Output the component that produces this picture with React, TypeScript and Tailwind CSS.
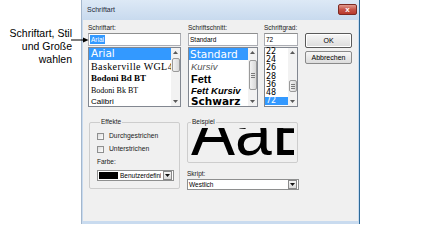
const sans = "font-['Liberation_Sans',Arial,sans-serif]";

const Arrow = ({ up }: { up?: boolean }) => (
  <div className="h-[9px] flex items-center justify-center">
    <svg width="5" height="3" viewBox="0 0 5 3">
      <path d={up ? "M0 3L2.5 0L5 3Z" : "M0 0L2.5 3L5 0Z"} fill="#5a5a5a" />
    </svg>
  </div>
);

const Thumb = ({ className, grip }: { className: string; grip?: boolean }) => (
  <div
    className={`${className} mx-[0.5px] rounded-[2px] border border-[#9a9a9a] bg-linear-to-r from-[#f3f3f3] to-[#d8d8d8] flex flex-col items-center justify-center gap-[1px]`}
  >
    {grip && (
      <>
        <div className="w-[4px] h-px bg-[#7a7a7a]" />
        <div className="w-[4px] h-px bg-[#7a7a7a]" />
        <div className="w-[4px] h-px bg-[#7a7a7a]" />
      </>
    )}
  </div>
);

const Scrollbar = ({ thumb, grip }: { thumb: string; grip?: boolean }) => (
  <div className="w-[9px] shrink-0 flex flex-col bg-[#f2f2f2]">
    <Arrow up />
    <div className="flex-1">
      <Thumb className={thumb} grip={grip} />
    </div>
    <Arrow />
  </div>
);

const Input = ({ children }: { children: React.ReactNode }) => (
  <div className="h-[13px] border border-[#abadb3] border-t-[#8e8f8f] bg-white pl-[1px] flex items-center text-[6.5px] leading-[9px]">
    {children}
  </div>
);

const Label = ({ children }: { children: React.ReactNode }) => (
  <div className="h-[11px] flex items-end pb-[1px] text-[6.5px] leading-[8px] text-[#1a1a1a]">{children}</div>
);

const DropButton = () => (
  <div className="w-[9px] h-[9px] mr-px shrink-0 border border-[#8a8a8a] bg-linear-to-b from-[#f6f6f6] to-[#dadada] flex items-center justify-center">
    <svg width="5" height="3" viewBox="0 0 5 3">
      <path d="M0 0L2.5 3L5 0Z" fill="#111" />
    </svg>
  </div>
);

const Checkbox = ({ label }: { label: string }) => (
  <div className="h-[10px] flex items-center gap-[5px]">
    <div className="w-[7px] h-[7px] border border-[#8e8f8f] bg-linear-to-br from-[#dcdcdc] to-white" />
    <span className="text-[6.75px] leading-[8px] text-[#1a1a1a]">{label}</span>
  </div>
);

export default function App() {
  return (
    <div className={`relative w-[429px] h-[240px] bg-white flex overflow-hidden ${sans}`}>
      {/* callout */}
      <div className="w-[81px] shrink-0 pt-[27px] pr-[9px] text-right text-[10.5px] leading-[13px] text-black">
        Schriftart, Stil
        <br />
        und Große
        <br />
        wahlen
      </div>
      <svg className="absolute left-[71px] top-[37px]" width="18" height="6" viewBox="0 0 18 6">
        <path d="M0 3H13" stroke="#000" strokeWidth="1" />
        <path d="M12 0.5L17.5 3L12 5.5Z" fill="#000" />
      </svg>

      {/* dialog window */}
      <div className="w-[279px] h-[224px] shrink-0 flex flex-col bg-[#c9dbef] border-l border-l-[#a4b7cd] border-r border-r-[#2d6a99]">
        <div className="h-[20px] shrink-0 flex items-center justify-between pl-[5px] pr-[2px] bg-linear-to-b from-[#dde9f6] to-[#c8daee]">
          <span className="text-[7px] leading-[9px] text-[#1e2b3a] -mt-[1px]">Schriftart</span>
          <div className="w-[19px] h-[11px] -mt-[1px] rounded-[2px] border border-[#7d2a22] bg-linear-to-b from-[#e09a8f] via-[#c75448] to-[#b8392c] flex items-center justify-center">
            <span className="text-[8px] leading-[8px] font-bold text-white">x</span>
          </div>
        </div>

        <div className="flex-1 mx-px mb-[3px] bg-[#f0f0f0] pl-[5px] pt-[2px] text-black">
          {/* top row */}
          <div className="flex">
            {/* Schriftart */}
            <div className="w-[93px] flex flex-col">
              <Label>Schriftart:</Label>
              <Input>
                <span className="bg-[#3399ff] text-white px-px">Arial</span>
              </Input>
              <div className="mt-px h-[60px] border border-[#828790] bg-white flex">
                <div className="flex-1 min-w-0 flex flex-col overflow-hidden whitespace-nowrap">
                  <div className="h-[12px] shrink-0 bg-[#3399ff] text-white flex items-center pl-[2px] font-['DejaVu_Sans',sans-serif] text-[10.5px]">
                    Arial
                  </div>
                  <div className="h-[13px] shrink-0 flex items-center pl-[2px] font-['Liberation_Serif',serif] text-[10px] tracking-[0.4px]">
                    Baskerville WGL4 BT
                  </div>
                  <div className="h-[12px] shrink-0 flex items-center pl-[2px] font-['Liberation_Serif',serif] text-[9px] font-bold">
                    Bodoni Bd BT
                  </div>
                  <div className="h-[12px] shrink-0 flex items-center pl-[2px] font-['Liberation_Serif',serif] text-[8px]">
                    Bodoni Bk BT
                  </div>
                  <div className="h-[9px] shrink-0 flex items-center pl-[2px] text-[8px] leading-[9px]">Calibri</div>
                </div>
                <Scrollbar thumb="mt-[1px] h-[14px]" />
              </div>
            </div>

            {/* Schriftschnitt */}
            <div className="ml-[7px] w-[70px] flex flex-col">
              <Label>Schriftschnitt:</Label>
              <Input>Standard</Input>
              <div className="mt-px h-[60px] border border-[#828790] bg-white flex">
                <div className="flex-1 min-w-0 flex flex-col overflow-hidden whitespace-nowrap">
                  <div className="h-[12px] shrink-0 bg-[#3399ff] text-white flex items-center pl-[1px] font-['DejaVu_Sans',sans-serif] text-[10.5px] leading-[12px]">
                    Standard
                  </div>
                  <div className="h-[13px] shrink-0 flex items-center pl-[2px] text-[9.5px] leading-[12px] italic text-[#555]">Kursiv</div>
                  <div className="h-[12px] shrink-0 flex items-center pl-[2px] text-[11px] leading-[12px] font-bold">Fett</div>
                  <div className="h-[12px] shrink-0 flex items-center pl-[2px] text-[9.5px] leading-[12px] font-bold italic">Fett Kursiv</div>
                  <div className="h-[9px] shrink-0 flex items-center pl-[2px] font-['DejaVu_Sans',sans-serif] text-[10.5px] leading-[9px] font-bold">
                    Schwarz
                  </div>
                </div>
                <Scrollbar thumb="mt-[3px] h-[30px]" grip />
              </div>
            </div>

            {/* Schriftgrad */}
            <div className="ml-[6px] w-[34px] flex flex-col">
              <Label>Schriftgrad:</Label>
              <Input>72</Input>
              <div className="mt-px h-[60px] border border-[#828790] bg-white flex">
                <div className="flex-1 min-w-0 flex flex-col font-['DejaVu_Sans',sans-serif] text-[8px] leading-[8.2px]">
                  {["22", "24", "26", "28", "36", "48"].map((s) => (
                    <div key={s} className="h-[8.2px] pl-px">
                      {s}
                    </div>
                  ))}
                  <div className="h-[8.2px] pl-px bg-[#3399ff] text-white">72</div>
                </div>
                <Scrollbar thumb="mt-[23px] h-[12px]" grip />
              </div>
            </div>

            {/* buttons */}
            <div className="ml-[7px] w-[47px] pt-[11px] flex flex-col text-[7px] leading-[9px]">
              <div className="h-[15px] rounded-[2px] border border-[#5a5a5a] bg-linear-to-b from-[#f7f7f7] to-[#dcdcdc] shadow-[inset_0_0_0_1px_#ffffff] flex items-center justify-center">
                OK
              </div>
              <div className="mt-[3px] h-[13px] rounded-[2px] border border-[#8a8a8a] bg-linear-to-b from-[#f7f7f7] to-[#dcdcdc] flex items-center justify-center">
                Abbrechen
              </div>
            </div>
          </div>

          {/* bottom row */}
          <div className="flex mt-[11px]">
            <fieldset className="ml-px w-[91px] min-w-0 h-[71px] border border-[#cdcdcd] rounded-[2px] pl-[7px]">
              <legend className="ml-[3px] px-px text-[6.5px] leading-[8px] text-[#1a1a1a]">Effekte</legend>
              <div className="mt-[5px]">
                <Checkbox label="Durchgestrichen" />
              </div>
              <div className="mt-[3px]">
                <Checkbox label="Unterstrichen" />
              </div>
              <div className="mt-[4px] text-[6.5px] leading-[8px] text-[#1a1a1a]">Farbe:</div>
              <div className="mt-[4px] w-[77px] h-[11px] border border-[#8e8f8f] bg-white flex items-center pl-px gap-[2px]">
                <div className="w-[19px] h-[7px] shrink-0 bg-black" />
                <span className="flex-1 min-w-0 text-[6.5px] leading-[8px] whitespace-nowrap overflow-hidden">Benutzerdefinie</span>
                <DropButton />
              </div>
            </fieldset>

            <div className="ml-[7px] w-[112px] flex flex-col">
              <fieldset className="w-[111px] min-w-0 h-[45px] border border-[#cdcdcd] rounded-[2px]">
                <legend className="ml-[3px] px-px text-[6.5px] leading-[8px] text-[#1a1a1a]">Beispiel</legend>
                <div className="mt-[2px] mx-[3px] h-[30px] overflow-hidden">
                  <div className="-mt-[29px] text-[66px] leading-[66px] whitespace-nowrap text-black">AaBbYyZz</div>
                </div>
              </fieldset>
              <div className="mt-[7px] text-[6.5px] leading-[8px] text-[#1a1a1a]">Skript:</div>
              <div className="mt-px h-[11px] border border-[#8e8f8f] bg-white flex items-center justify-between pl-[1px]">
                <span className="text-[6.5px] leading-[8px]">Westlich</span>
                <DropButton />
              </div>
            </div>
          </div>
        </div>
      </div>
    </div>
  );
}
